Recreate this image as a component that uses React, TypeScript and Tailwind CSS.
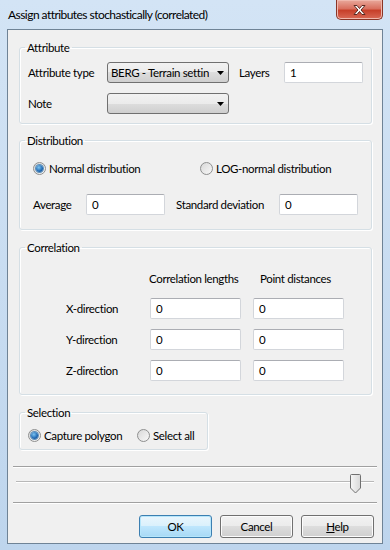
import type { ReactNode } from 'react';

function GroupBox({ title, className, bodyClassName, children }: { title: string; className?: string; bodyClassName?: string; children: ReactNode }) {
    return (
        <fieldset className={`border border-[#d5dfe5] rounded-[3px] shadow-[inset_1px_1px_0_#ffffff,1px_1px_0_#ffffff] ${className ?? ''}`}>
            <legend className="ml-[5px] px-[2px] leading-[15px]">{title}</legend>
            <div className={bodyClassName}>{children}</div>
        </fieldset>
    );
}

function TextBox({ value, className }: { value: string; className?: string }) {
    return (
        <div className={`h-[21px] bg-white border border-[#d3d6db] border-t-[#abadb3] rounded-[2px] flex items-center pl-[5px] ${className ?? ''}`}>
            {value}
        </div>
    );
}

function ComboBox({ value }: { value?: string }) {
    return (
        <div className="h-[21px] w-[122px] border border-[#707070] rounded-[3px] bg-[linear-gradient(#f2f2f2,#ebebeb_50%,#dddddd_50%,#cfcfcf)] flex items-center pl-[3px] pr-[4px]">
            <span className="w-[98px] whitespace-nowrap overflow-hidden">{value}</span>
            <svg width="7" height="4" viewBox="0 0 7 4" className="shrink-0 ml-auto">
                <path d="M0 0h7L3.5 4z" fill="#000" />
            </svg>
        </div>
    );
}

function Radio({ label, checked, className }: { label: string; checked?: boolean; className?: string }) {
    return (
        <div className={`h-[15px] flex items-center gap-[3px] ${className ?? ''}`}>
            <div className="w-[13px] h-[13px] rounded-full border border-[#8e8f8f] bg-[linear-gradient(135deg,#d8d8d8,#f8f8f8)] flex items-center justify-center shrink-0">
                {checked && (
                    <div className="w-[7px] h-[7px] rounded-full bg-[radial-gradient(circle_at_40%_35%,#7cc4f0,#1f68b3_60%,#0e4683)] shadow-[0_0_0_1px_#5e8fb8]" />
                )}
            </div>
            <span className="whitespace-nowrap">{label}</span>
        </div>
    );
}

function Button({ children, primary }: { children: ReactNode; primary?: boolean }) {
    return (
        <div
            className={
                primary
                    ? 'w-[73px] h-[23px] border border-[#3c7fb1] rounded-[3px] bg-[linear-gradient(#eaf6fd,#d9f0fc_50%,#bee6fd_50%,#a7d9f5)] shadow-[inset_0_0_0_1px_#b6e6fb] flex items-center justify-center'
                    : 'w-[73px] h-[23px] border border-[#707070] rounded-[3px] bg-[linear-gradient(#f2f2f2,#ebebeb_50%,#dddddd_50%,#cfcfcf)] shadow-[inset_0_0_0_1px_#fcfcfc] flex items-center justify-center'
            }
        >
            {children}
        </div>
    );
}

function Separator() {
    return <div className="mx-[5px] h-[2px] border-t border-[#a0a0a0] border-b border-b-white" />;
}

export default function App() {
    return (
        <div className="w-[390px] h-[550px] overflow-hidden flex flex-col bg-[linear-gradient(#d3e4f5,#bed5ed)] font-['Lato',sans-serif] text-[11.5px] tracking-[-0.35px] text-black">
            {/* title bar */}
            <div className="h-[29px] flex items-start justify-between">
                <div className="pl-[8px] pt-[7px] leading-[16px] text-[12px] tracking-[-0.55px]">Assign attributes stochastically (correlated)</div>
                <div className="mr-[7px] w-[47px] h-[20px] rounded-b-[5px] border border-t-0 border-[#8a3526] bg-[linear-gradient(#e9a99c,#d9705f_45%,#c7402a_55%,#d96a56)] shadow-[inset_0_0_0_1px_#f0b8ad] flex items-center justify-center">
                    <svg width="15" height="12" viewBox="0 0 15 12">
                        <path
                            d="M2 1.5h3l2.5 3 2.5-3h3l-4 4.5 4 4.5h-3l-2.5-3-2.5 3h-3l4-4.5z"
                            fill="#ffffff"
                            stroke="#5a2a22"
                            strokeWidth="1"
                            strokeLinejoin="round"
                        />
                    </svg>
                </div>
            </div>

            {/* client area */}
            <div className="flex-1 ml-[7px] mr-[7px] mb-[6px] border border-[#6f8396] bg-[#f0f0f0] flex flex-col">
                <GroupBox title="Attribute" className="mt-[10px] ml-[11px] mr-[10px]" bodyClassName="pt-[7px] pb-[9px] pl-[8px]">
                    <div className="flex items-center h-[21px]">
                        <span className="w-[79px]">Attribute type</span>
                        <ComboBox value="BERG - Terrain settings" />
                        <span className="ml-[10px] w-[45px]">Layers</span>
                        <TextBox value="1" className="w-[79px]" />
                    </div>
                    <div className="flex items-center h-[21px] mt-[10px]">
                        <span className="w-[79px]">Note</span>
                        <ComboBox />
                    </div>
                </GroupBox>

                <GroupBox title="Distribution" className="mt-[9px] ml-[11px] mr-[10px]" bodyClassName="pt-[13px] pb-[14px] pl-[13px]">
                    <div className="flex">
                        <Radio label="Normal distribution" checked className="w-[167px]" />
                        <Radio label="LOG-normal distribution" />
                    </div>
                    <div className="flex items-center h-[21px] mt-[18px]">
                        <span className="w-[53px]">Average</span>
                        <TextBox value="0" className="w-[79px]" />
                        <span className="ml-[11px] w-[103px]">Standard deviation</span>
                        <TextBox value="0" className="w-[79px]" />
                    </div>
                </GroupBox>

                <GroupBox title="Correlation" className="mt-[10px] ml-[11px] mr-[10px]" bodyClassName="pt-[16px] pb-[13px]">
                    <div className="flex h-[15px] items-center pl-[129px]">
                        <span className="w-[111px]">Correlation lengths</span>
                        <span>Point distances</span>
                    </div>
                    {['X-direction', 'Y-direction', 'Z-direction'].map((label, i) => (
                        <div key={label} className={`flex items-center h-[21px] pl-[46px] ${i === 0 ? 'mt-[12px]' : 'mt-[10px]'}`}>
                            <span className="w-[84px]">{label}</span>
                            <TextBox value="0" className="w-[91px]" />
                            <TextBox value="0" className="w-[91px] ml-[12px]" />
                        </div>
                    ))}
                </GroupBox>

                <GroupBox title="Selection" className="mt-[10px] ml-[11px] w-[189px]" bodyClassName="pt-[8px] pb-[6px] pl-[8px]">
                    <div className="flex">
                        <Radio label="Capture polygon" checked className="w-[109px]" />
                        <Radio label="Select all" />
                    </div>
                </GroupBox>

                <div className="mt-[16px]">
                    <Separator />
                </div>

                {/* slider */}
                <div className="h-[34px] relative mx-[8px]">
                    <div className="absolute left-0 right-0 top-[13px] h-[2px] border-t border-[#b8b8b8] border-b border-b-[#ffffff]" />
                    <svg width="11" height="20" viewBox="0 0 11 20" className="absolute left-[334px] top-[6px]">
                        <defs>
                            <linearGradient id="thumb" x1="0" y1="0" x2="1" y2="0">
                                <stop offset="0" stopColor="#f6f6f6" />
                                <stop offset="1" stopColor="#d8d8d8" />
                            </linearGradient>
                        </defs>
                        <path d="M1.5 0.5h8a1 1 0 0 1 1 1v12.5l-5 5-5-5v-12.5a1 1 0 0 1 1-1z" fill="url(#thumb)" stroke="#707070" />
                    </svg>
                </div>

                <Separator />

                <div className="mt-[11px] flex justify-end gap-[8px] pr-[8px]">
                    <Button primary>OK</Button>
                    <Button>Cancel</Button>
                    <Button>
                        <span><span className="underline">H</span>elp</span>
                    </Button>
                </div>
            </div>
        </div>
    );
}
